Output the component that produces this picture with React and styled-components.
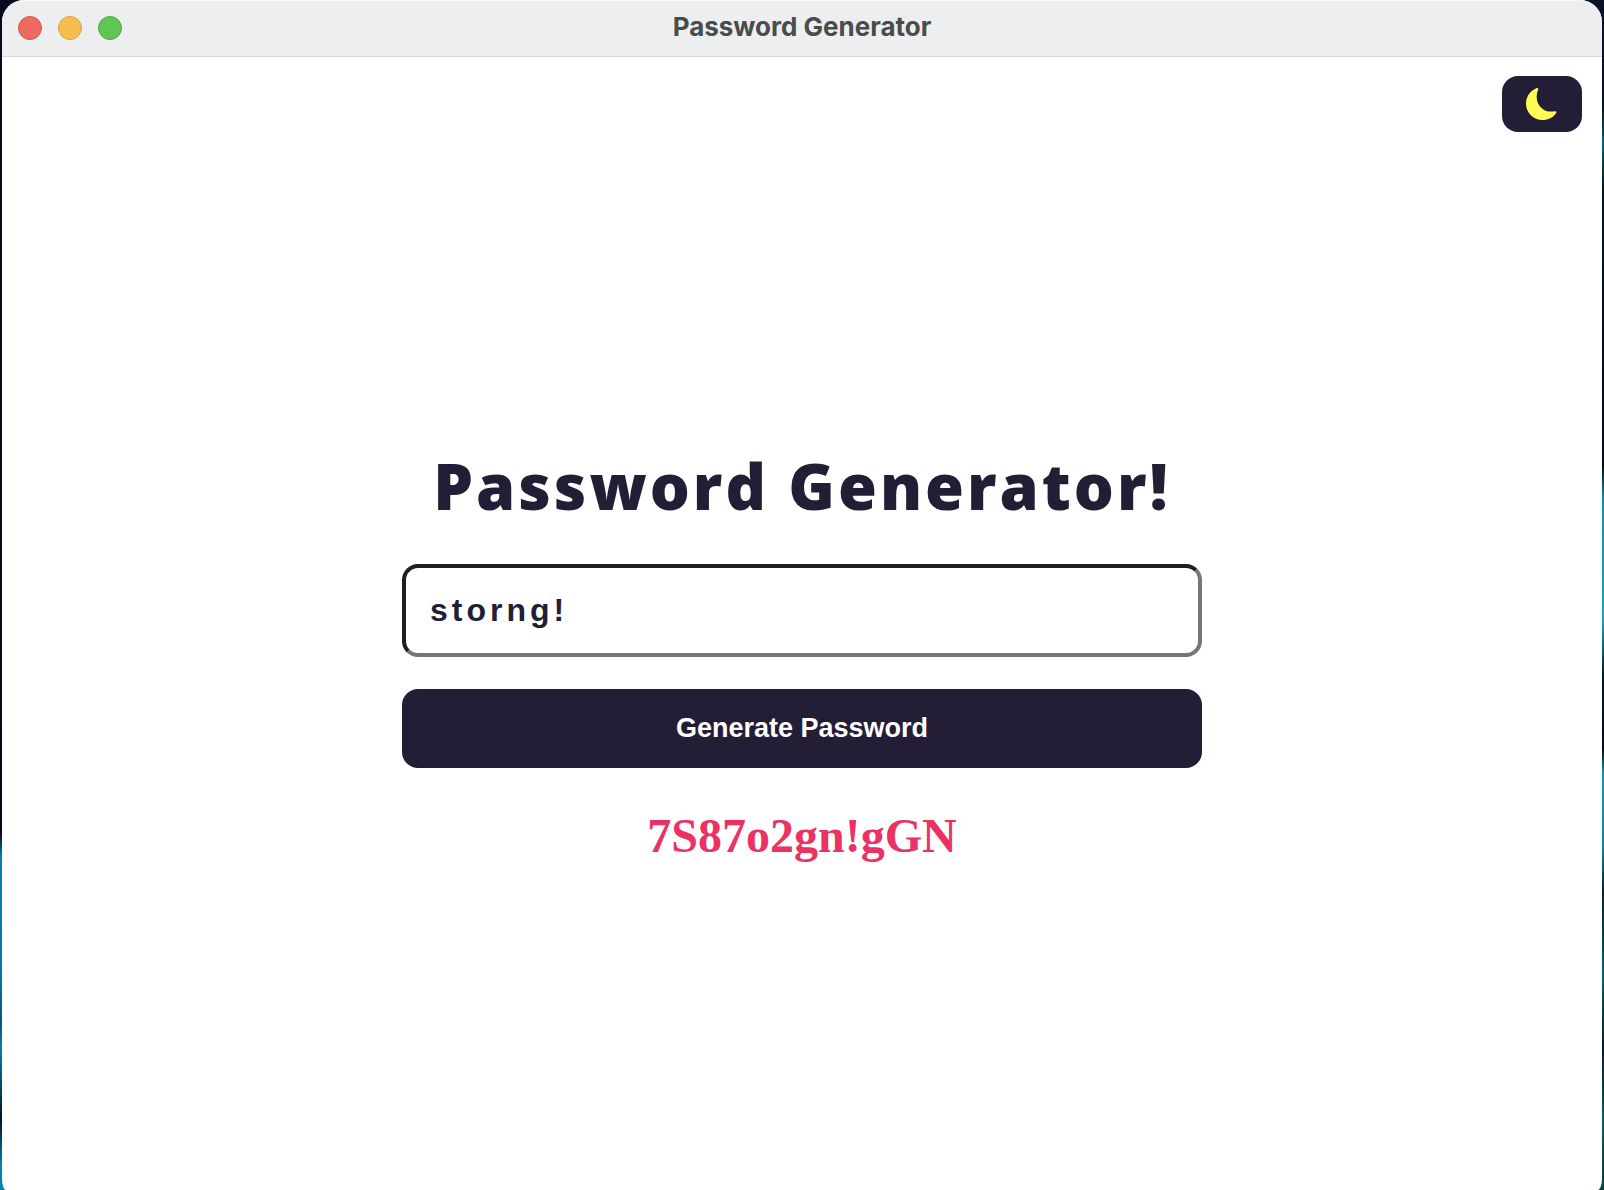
import React, { useState } from "react";
import styled, { createGlobalStyle } from "styled-components";

const ink = "#231d36";

const GlobalStyle = createGlobalStyle`
  * { box-sizing: border-box; }
  body {
    margin: 0;
    background:
      linear-gradient(to bottom, #060a1c 0, #04081a 70%, #0583ab 72%, #05789f 82%, #04567a 86%, #0583ab 88%, #021427 94%, #0583ab 98%) left / 50% 100% no-repeat,
      linear-gradient(to bottom, #0a1226 0, #06101f 9%, #066079 12%, #041220 16%, #020714 39%, #0b93a8 42%, #19a9bb 52%, #04121f 57%, #020b16 63%, #0b9bb0 65%, #0b8ba0 71%, #03202e 75%, #06606f 82%, #041c26 88%, #0a5a5f 94%, #0a4038 100%) right / 50% 100% no-repeat;
  }
`;

const Window = styled.div`
  display: flex;
  flex-direction: column;
  min-height: 100vh;
  margin: 0 2px;
  overflow: hidden;
  background: #fff;
  border-radius: 22px 22px 4px 4px / 22px 22px 12px 12px;
`;

const TitleBar = styled.header`
  display: grid;
  grid-template-columns: 1fr auto 1fr;
  align-items: center;
  height: 57px;
  padding: 0 16px 2px;
  background: #edeef0;
  border-top: 1px solid #f8f9f9;
  border-bottom: 1px solid #d6d9d9;
`;

const Lights = styled.div`
  display: flex;
  gap: 16px;
`;

const Light = styled.button`
  width: 24px;
  height: 24px;
  padding: 0;
  border: 1px solid ${(p) => p.$edge};
  border-radius: 50%;
  background: ${(p) => p.$fill};
`;

const WindowTitle = styled.span`
  padding-bottom: 2px;
  font: 700 26px/32px Inter, sans-serif;
  color: #4a4b4b;
`;

const Toolbar = styled.div`
  display: flex;
  justify-content: flex-end;
  padding: 19px 20px 0;
`;

const ThemeToggle = styled.button`
  display: grid;
  place-items: center;
  width: 80px;
  height: 56px;
  padding: 0;
  border: 0;
  border-radius: 16px;
  background: ${ink};
`;

const Main = styled.main`
  display: flex;
  flex: 1;
  flex-direction: column;
  align-items: center;
  justify-content: center;
  padding-bottom: 12px;
`;

const Heading = styled.h1`
  margin: 0 0 38px;
  font: 800 63px/80px "Open Sans", sans-serif;
  letter-spacing: 3px;
  color: ${ink};
`;

const Form = styled.form`
  display: flex;
  flex-direction: column;
  gap: 32px;
  width: 50%;
`;

const Field = styled.input`
  width: 100%;
  height: 93px;
  padding: 0 24px;
  border: 4px solid;
  border-color: #1f1f1f #767676 #767676 #1f1f1f;
  border-radius: 16px;
  outline: 0;
  background: #fff;
  font: 700 32px/36px "Liberation Sans", Arial, sans-serif;
  letter-spacing: 4px;
  color: ${ink};
`;

const Submit = styled.button`
  height: 79px;
  padding: 0 16px 2px;
  border: 0;
  border-radius: 16px;
  background: ${ink};
  font: 700 27px/32px "Liberation Sans", Arial, sans-serif;
  color: #fff;
`;

const Result = styled.output`
  margin-top: 40px;
  font: 700 48px/56px "Liberation Serif", "Times New Roman", serif;
  color: #ea3264;
`;

const lights = [
  { name: "Close", fill: "#ec6a5e", edge: "#d5584d" },
  { name: "Minimize", fill: "#f4bf50", edge: "#d8a13e" },
  { name: "Zoom", fill: "#61c554", edge: "#52a842" },
];

export default function App() {
  const [keyword, setKeyword] = useState("storng!");

  return (
    <>
      <GlobalStyle />
      <Window>
        <TitleBar>
          <Lights>
            {lights.map((l) => (
              <Light key={l.name} type="button" aria-label={l.name} $fill={l.fill} $edge={l.edge} />
            ))}
          </Lights>
          <WindowTitle>Password Generator</WindowTitle>
        </TitleBar>
        <Toolbar>
          <ThemeToggle type="button" aria-label="Toggle dark mode">
            <svg width="32" height="32" viewBox="0 0 32 32" aria-hidden="true">
              <path
                d="M9.800 .4C11.500 -.4 12.600 .5 12.100 2C11.200 4 10.700 6.500 10.700 9.300A14.300 14.300 0 0 0 25 23.600C26.500 23.600 27.500 23.400 28.700 23.200C30.200 23 30.800 24 30 25.200C27 29.500 22.200 32 16.500 32C7.300 32 0 24.700 0 15.700C0 8.800 3.800 3.100 9.800 .4Z"
                fill="#fffb54"
              />
            </svg>
          </ThemeToggle>
        </Toolbar>
        <Main>
          <Heading>Password Generator!</Heading>
          <Form onSubmit={(e) => e.preventDefault()}>
            <Field
              type="text"
              aria-label="Keyword"
              value={keyword}
              onChange={(e) => setKeyword(e.target.value)}
            />
            <Submit type="submit">Generate Password</Submit>
          </Form>
          <Result>7S87o2gn!gGN</Result>
        </Main>
      </Window>
    </>
  );
}
